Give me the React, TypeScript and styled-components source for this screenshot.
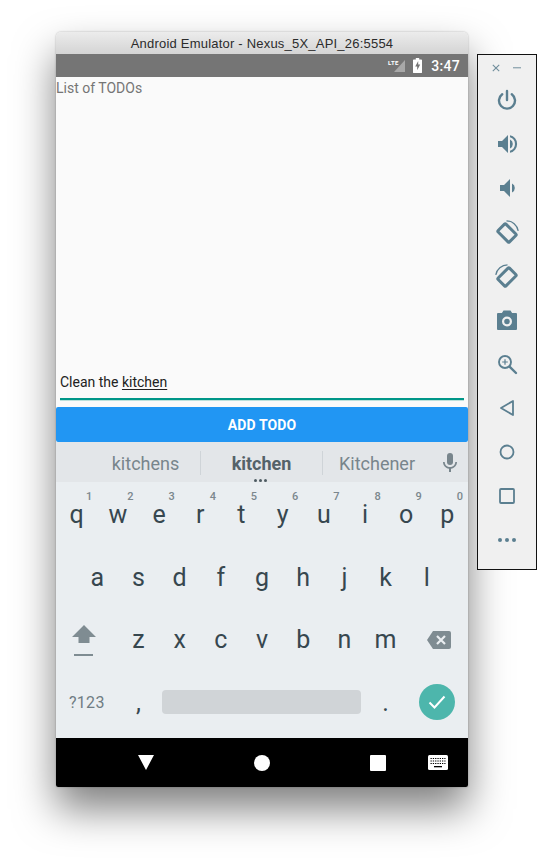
import * as React from "react";
import styled, { createGlobalStyle } from "styled-components";

const GlobalStyle = createGlobalStyle`
  html, body {
    margin: 0;
    padding: 0;
    background: #fff;
    overflow: hidden;
  }
`;

const Page = styled.div`
  width: 537px;
  height: 867px;
  padding: 32px 0 0 56px;
  box-sizing: border-box;
  display: flex;
  align-items: flex-start;
  font-family: Roboto, sans-serif;
`;

const EmulatorWindow = styled.div`
  width: 412px;
  height: 755px;
  flex: none;
  display: flex;
  flex-direction: column;
  border-radius: 5px 5px 2px 2px;
  overflow: hidden;
  box-shadow: 0 22px 40px rgba(0, 0, 0, 0.5), 0 0 2px rgba(0, 0, 0, 0.3);
`;

const TitleBar = styled.div`
  height: 22px;
  flex: none;
  display: flex;
  align-items: center;
  justify-content: center;
  background: linear-gradient(#ececec, #d4d4d4);
  font: 13px "Liberation Sans", sans-serif;
  letter-spacing: 0.21px;
  color: #2b2b2b;
`;

const StatusBar = styled.div`
  height: 23px;
  flex: none;
  display: flex;
  align-items: center;
  justify-content: flex-end;
  padding-right: 8px;
  background: #757575;
  color: #fff;
  font-size: 14px;
  font-weight: 500;
  letter-spacing: 0.3px;
`;

const SignalIcon = styled.svg`
  width: 18px;
  height: 14px;
  margin-right: 8px;
`;

const BatteryIcon = styled.svg`
  width: 9px;
  height: 15px;
  margin-right: 9px;
`;

const AppArea = styled.div`
  flex: 1;
  display: flex;
  flex-direction: column;
  background: #fafafa;
`;

const ListTitle = styled.div`
  flex: 1;
  font-size: 14px;
  line-height: 23px;
  color: #757575;
`;

const InputRow = styled.div`
  margin: 0 4px;
  height: 25px;
  padding-top: 2px;
  font-size: 14px;
  line-height: 19px;
  color: #212121;
  border-bottom: 2px solid #009688;
  box-shadow: 0 1px 0 rgba(0, 150, 136, 0.25);
  box-sizing: content-box;
  & u {
    text-underline-offset: 2px;
  }
`;

const AddButton = styled.button`
  height: 35px;
  margin-top: 7px;
  width: 100%;
  border: none;
  border-radius: 2px;
  background: #2196f3;
  color: #fff;
  font: 700 14px Roboto, sans-serif;
  letter-spacing: 0.1px;
  padding: 0;
`;

const SuggestionBar = styled.div`
  height: 40px;
  flex: none;
  box-sizing: border-box;
  padding-top: 2px;
  display: grid;
  grid-template-columns: 144px 122px 109px 24px;
  align-items: center;
  position: relative;
  background: #e3e6e9;
  color: #78858c;
  font-size: 18px;
`;

const Suggestion = styled.div<{ $bold?: boolean; $divider?: boolean; $indent?: number }>`
  height: 24px;
  line-height: 26px;
  text-align: center;
  padding-left: ${(p) => p.$indent ?? 0}px;
  box-sizing: border-box;
  font-weight: ${(p) => (p.$bold ? 700 : 400)};
  color: ${(p) => (p.$bold ? "#546269" : "inherit")};
  border-left: ${(p) => (p.$divider ? "1px solid #cfd4d8" : "none")};
`;

const MicIcon = styled.svg`
  width: 24px;
  height: 24px;
  margin-left: 7px;
  fill: #78858c;
`;

const MoreDots = styled.div`
  position: absolute;
  left: 198px;
  bottom: 0;
  display: flex;
  gap: 2px;
  & i {
    width: 3px;
    height: 3px;
    border-radius: 50%;
    background: #4e5b62;
  }
`;

const Keyboard = styled.div`
  height: 256px;
  flex: none;
  background: #eaeef1;
  color: #37474f;
  display: flex;
  flex-direction: column;
  font-size: 25px;
`;

const KeyRow = styled.div`
  height: 62.5px;
  flex: none;
  display: flex;
  justify-content: center;
  &:first-child {
    height: 64px;
  }
`;

const Key = styled.div<{ $w?: number; $shift?: number }>`
  width: ${(p) => p.$w ?? 41.2}px;
  flex: none;
  display: flex;
  align-items: center;
  justify-content: center;
  position: relative;
  padding-left: ${(p) => Math.max(p.$shift ?? 0, 0)}px;
  padding-right: ${(p) => Math.max(-(p.$shift ?? 0), 0)}px;
  box-sizing: border-box;
`;

const Digit = styled.span`
  position: absolute;
  top: 8px;
  left: 30px;
  font-size: 11px;
  font-weight: 500;
  line-height: 13px;
  color: #7b878d;
`;

const SymbolsLabel = styled.span`
  font-size: 16px;
  color: #6f7c83;
  letter-spacing: 0.3px;
`;

const SpaceBar = styled.div`
  width: 199px;
  height: 24px;
  border-radius: 4px;
  background: #d0d4d7;
`;

const DoneButton = styled.div`
  width: 36px;
  height: 36px;
  border-radius: 50%;
  background: #4db6ac;
  display: flex;
  align-items: center;
  justify-content: center;
`;

const NavBar = styled.div`
  height: 49px;
  flex: none;
  display: flex;
  align-items: center;
  background: #000;
  padding: 0 0 0 82px;
  box-sizing: border-box;
`;

const NavIcon = styled.svg<{ $gap?: number }>`
  display: block;
  flex: none;
  margin-left: ${(p) => p.$gap ?? 0}px;
`;

const ToolPanel = styled.div`
  width: 60px;
  height: 516px;
  flex: none;
  margin: 22px 0 0 9px;
  box-sizing: border-box;
  border: 1px solid #111;
  background: #f0f0f0;
  display: flex;
  flex-direction: column;
  position: relative;
`;

const PanelHeader = styled.div`
  height: 23px;
  flex: none;
  display: flex;
  align-items: center;
  padding: 3px 0 0 14px;
  box-sizing: border-box;
  gap: 13px;
`;

const ToolButton = styled.div`
  height: 44px;
  flex: none;
  display: flex;
  align-items: center;
  justify-content: center;
`;

const ToolIcon = styled.svg`
  width: 24px;
  height: 24px;
  display: block;
  color: #5b7f90;
`;

const PanelGlyph = styled.svg`
  display: block;
  color: #6f8d9b;
`;

const row1 = ["q", "w", "e", "r", "t", "y", "u", "i", "o", "p"];
const digits = ["1", "2", "3", "4", "5", "6", "7", "8", "9", "0"];
const row2 = ["a", "s", "d", "f", "g", "h", "j", "k", "l"];
const row3 = ["z", "x", "c", "v", "b", "n", "m"];

const toolIcons: React.ReactNode[] = [
  // power
  <g key="p" fill="none" stroke="currentColor" strokeWidth="2.4" strokeLinecap="round">
    <path d="M12 3v9" />
    <path d="M7.2 6.2a8 8 0 1 0 9.6 0" />
  </g>,
  // volume up
  <g key="vu" fill="currentColor">
    <path d="M3 9v6h4l6 6V3L7 9z" />
    <path d="M15 7.5a5 5 0 0 1 0 9z" />
    <path d="M15 3.2v2.1a7 7 0 0 1 0 13.4v2.1a9 9 0 0 0 0-17.6z" />
  </g>,
  // volume down
  <g key="vd" fill="currentColor">
    <path d="M5 9v6h4l6 6V3L9 9z" />
    <path d="M17 7.5a5 5 0 0 1 0 9z" />
  </g>,
  // rotate right
  <g key="rr" fill="none" stroke="currentColor">
    <rect x="6.500" y="5" width="11" height="16" rx="1" strokeWidth="3" transform="rotate(-45 12 13)" />
    <path d="M11.500.8a12 12 0 0 1 11.700 10" strokeWidth="1.300" />
  </g>,
  // rotate left
  <g key="rl" fill="none" stroke="currentColor">
    <rect x="6.500" y="5" width="11" height="16" rx="1" strokeWidth="3" transform="rotate(45 12 13)" />
    <path d="M12.500.8A12 12 0 0 0 .8 10.800" strokeWidth="1.300" />
  </g>,
  // camera
  <path
    key="c"
    fill="currentColor"
    fillRule="evenodd"
    d="M8.5 2.5h7l1.6 2.5H21a1 1 0 0 1 1 1V21a1 1 0 0 1-1 1H3a1 1 0 0 1-1-1V6a1 1 0 0 1 1-1h3.9zM12 8.5a5 5 0 1 0 0 10 5 5 0 0 0 0-10zm0 2.2a2.8 2.8 0 1 1 0 5.6 2.8 2.8 0 0 1 0-5.6z"
  />,
  // zoom in
  <g key="z" fill="none" stroke="currentColor">
    <circle cx="10" cy="10" r="6" strokeWidth="1.900" />
    <path d="M14.800 14.800l6.200 6.200" strokeWidth="2.400" strokeLinecap="round" />
    <path d="M10 7.200v5.600M7.200 10h5.600" strokeWidth="1.200" />
  </g>,
  // back
  <path key="b" d="M18 5v14L6 12z" fill="none" stroke="currentColor" strokeWidth="1.800" strokeLinejoin="round" />,
  // home
  <circle key="h" cx="12" cy="12" r="6.500" fill="none" stroke="currentColor" strokeWidth="1.800" />,
  // overview
  <rect key="o" x="5" y="5" width="14" height="14" rx="1" fill="none" stroke="currentColor" strokeWidth="1.800" />,
  // more
  <g key="m" fill="currentColor">
    <circle cx="5" cy="12" r="2" />
    <circle cx="12" cy="12" r="2" />
    <circle cx="19" cy="12" r="2" />
  </g>,
];

export default function App() {
  return (
    <>
      <GlobalStyle />
      <Page>
        <EmulatorWindow>
          <TitleBar>Android Emulator - Nexus_5X_API_26:5554</TitleBar>
          <StatusBar>
            <SignalIcon viewBox="0 0 18 14">
              <path d="M18 1v12H7z" fill="#a8a8a8" />
              <text x="1" y="6" fontSize="6" fontWeight="700" fontFamily="Roboto" fill="#fff">
                LTE
              </text>
            </SignalIcon>
            <BatteryIcon viewBox="0 0 9 15">
              <path d="M2.800 0h3.400v1.500h2a.8.8 0 0 1 .8.8v12a.8.8 0 0 1-.8.8H.8a.8.8 0 0 1-.8-.8v-12a.8.8 0 0 1 .8-.8h2z" fill="#fff" />
              <path d="M5.200 3L2.200 8.500h2v3.800l3-5.700h-2z" fill="#757575" />
            </BatteryIcon>
            3:47
          </StatusBar>
          <AppArea>
            <ListTitle>List of TODOs</ListTitle>
            <InputRow>
              Clean the <u>kitchen</u>
            </InputRow>
            <AddButton>ADD TODO</AddButton>
          </AppArea>
          <SuggestionBar>
            <Suggestion $indent={35}>kitchens</Suggestion>
            <Suggestion $bold $divider>
              kitchen
            </Suggestion>
            <Suggestion $divider>Kitchener</Suggestion>
            <MicIcon viewBox="0 0 24 24">
              <path d="M12 14a3 3 0 0 0 3-3V5a3 3 0 0 0-6 0v6a3 3 0 0 0 3 3z" />
              <path d="M17.300 11c0 3-2.500 5.100-5.300 5.100S6.700 14 6.700 11H5c0 3.400 2.700 6.200 6 6.700V21h2v-3.300c3.300-.5 6-3.300 6-6.700z" />
            </MicIcon>
            <MoreDots>
              <i />
              <i />
              <i />
            </MoreDots>
          </SuggestionBar>
          <Keyboard>
            <KeyRow>
              {row1.map((k, i) => (
                <Key key={k}>
                  {k}
                  <Digit>{digits[i]}</Digit>
                </Key>
              ))}
            </KeyRow>
            <KeyRow>
              {row2.map((k) => (
                <Key key={k}>{k}</Key>
              ))}
            </KeyRow>
            <KeyRow>
              <Key $w={62} $shift={-5}>
                <svg width="26" height="34" viewBox="0 0 26 34">
                  <path d="M13 2L1 14h6.500v6h11v-6H25z" fill="#7f8c92" />
                  <rect x="3" y="31" width="19" height="2" fill="#7f8c92" />
                </svg>
              </Key>
              {row3.map((k) => (
                <Key key={k}>{k}</Key>
              ))}
              <Key $w={62} $shift={4}>
                <svg width="24" height="18" viewBox="0 0 24 18">
                  <path d="M6 0h16a2 2 0 0 1 2 2v14a2 2 0 0 1-2 2H6l-6-9z" fill="#7f8c92" />
                  <path d="M10 5l8 8M18 5l-8 8" stroke="#eaeef1" strokeWidth="2.200" />
                </svg>
              </Key>
            </KeyRow>
            <KeyRow>
              <Key $w={62}>
                <SymbolsLabel>?123</SymbolsLabel>
              </Key>
              <Key>,</Key>
              <Key $w={206} $shift={-2}>
                <SpaceBar />
              </Key>
              <Key>.</Key>
              <Key $w={62}>
                <DoneButton>
                  <svg width="18" height="14" viewBox="0 0 18 14">
                    <path d="M1.500 7.500l5 5L16.500 1.500" fill="none" stroke="#fff" strokeWidth="2" />
                  </svg>
                </DoneButton>
              </Key>
            </KeyRow>
          </Keyboard>
          <NavBar>
            <NavIcon width="16" height="15" viewBox="0 0 16 15">
              <path d="M0 0h16L8 15z" fill="#fff" />
            </NavIcon>
            <NavIcon $gap={100} width="16" height="16" viewBox="0 0 16 16">
              <circle cx="8" cy="8" r="8" fill="#fff" />
            </NavIcon>
            <NavIcon $gap={100} width="16" height="16" viewBox="0 0 16 16">
              <rect width="16" height="16" rx="1" fill="#fff" />
            </NavIcon>
            <NavIcon $gap={42} width="20" height="15" viewBox="0 0 20 15">
              <rect width="20" height="15" rx="1.500" fill="#fff" />
              <path d="M2.500 3.500h15M2.500 6h15M2.500 8.500h15" stroke="#000" strokeWidth="1.200" strokeDasharray="1.300 1" />
              <rect x="6" y="11" width="8" height="1.300" fill="#000" />
            </NavIcon>
          </NavBar>
        </EmulatorWindow>
        <ToolPanel>
          <PanelHeader>
            <PanelGlyph width="8" height="8" viewBox="0 0 8 8">
              <path d="M.8.8l6.400 6.400M7.200.8L.8 7.200" stroke="currentColor" strokeWidth="1.100" />
            </PanelGlyph>
            <PanelGlyph width="8" height="2" viewBox="0 0 8 2">
              <rect width="8" height="1.400" fill="currentColor" opacity="0.7" />
            </PanelGlyph>
          </PanelHeader>
          {toolIcons.map((icon, i) => (
            <ToolButton key={i}>
              <ToolIcon viewBox="0 0 24 24">{icon}</ToolIcon>
            </ToolButton>
          ))}
        </ToolPanel>
      </Page>
    </>
  );
}
